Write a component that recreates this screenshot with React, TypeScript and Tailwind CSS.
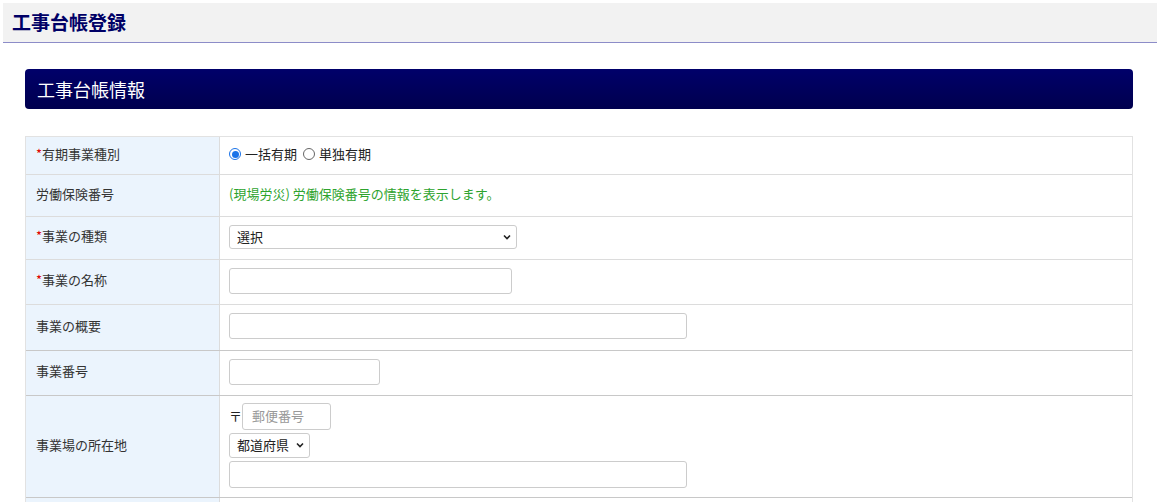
import React from 'react';

const font = { fontFamily: '"Noto Sans CJK JP", "Noto Sans", sans-serif' };

function Chevron() {
  return (
    <svg width="10" height="10" viewBox="0 0 10 10" className="shrink-0">
      <path d="M2 3.5 L5 6.5 L8 3.5" fill="none" stroke="#222" strokeWidth="1.6" />
    </svg>
  );
}

function Row({ label, required, h, border = 'border-[#dcdcdc]', children }: { label: string; required?: boolean; h: string; border?: string; children?: React.ReactNode }) {
  return (
    <div className={`flex border-t ${border} ${h}`}>
      <div className="flex w-[194px] shrink-0 items-center border-r border-[#dcdcdc] bg-[#ebf4fd] pb-[4px] pl-[10px] text-[13px] text-[#333]">
        {required ? <span className="text-[#e00000]">*</span> : null}
        {label}
      </div>
      <div className="flex flex-1 items-center pb-[3px] pl-[9px] text-[13px] text-[#222]">{children}</div>
    </div>
  );
}

export default function App() {
  return (
    <div className="min-h-[502px] bg-white pt-[3px]" style={font}>
      <div className="mx-[3px] mr-[5px] flex h-[40px] items-center border-b border-[#8c8cc8] bg-[#f2f2f2] pl-[9px]">
        <h1 className="text-[19px] font-bold text-[#000066]">工事台帳登録</h1>
      </div>

      <div className="ml-[25px] mr-[29px] mt-[26px]">
        <div className="flex h-[40px] items-center rounded-[4px] bg-gradient-to-b from-[#00006a] to-[#00004e] pl-[12px] text-[18px] text-white">
          工事台帳情報
        </div>

        <div className="mt-[27px] border-x border-[#e2e2e2]">
          <Row label="有期事業種別" required h="h-[38px]" border="border-[#e2e2e2]">
            <span className="flex items-center gap-[4px]">
              <span className="flex h-[12px] w-[12px] items-center justify-center rounded-full border border-[#1a73e8]">
                <span className="h-[7px] w-[7px] rounded-full bg-[#1a73e8]" />
              </span>
              一括有期
              <span className="ml-[2px] h-[12px] w-[12px] rounded-full border border-[#666]" />
              単独有期
            </span>
          </Row>
          <Row label="労働保険番号" h="h-[42px]">
            <span className="text-[#2ea32e]">(現場労災) 労働保険番号の情報を表示します。</span>
          </Row>
          <Row label="事業の種類" required h="h-[43px]">
            <div className="flex h-[24px] w-[288px] items-center justify-between rounded-[3px] border border-[#ccc] bg-white pl-[7px] pr-[4px]">
              <span>選択</span>
              <Chevron />
            </div>
          </Row>
          <Row label="事業の名称" required h="h-[45px]">
            <div className="h-[26px] w-[283px] rounded-[3px] border border-[#ccc] bg-white" />
          </Row>
          <Row label="事業の概要" h="h-[46px]">
            <div className="h-[26px] w-[458px] rounded-[3px] border border-[#ccc] bg-white" />
          </Row>
          <Row label="事業番号" h="h-[45px]" border="border-[#c8c8c8]">
            <div className="h-[26px] w-[151px] rounded-[3px] border border-[#ccc] bg-white" />
          </Row>
          <Row label="事業場の所在地" h="h-[102px]" border="border-[#c8c8c8]">
            <div className="flex flex-col gap-[3px]">
              <div className="flex items-center">
                <span className="text-[13px]">〒</span>
                <div className="flex h-[27px] w-[89px] items-center rounded-[3px] border border-[#ccc] bg-white pl-[9px] text-[#999]">郵便番号</div>
              </div>
              <div className="flex h-[25px] w-[81px] items-center justify-between rounded-[3px] border border-[#ccc] bg-white pl-[7px] pr-[4px]">
                <span>都道府県</span>
                <Chevron />
              </div>
              <div className="h-[27px] w-[458px] rounded-[3px] border border-[#ccc] bg-white" />
            </div>
          </Row>
          <Row label="" h="h-[20px]" border="border-[#c8c8c8]" />
        </div>
      </div>
    </div>
  );
}
